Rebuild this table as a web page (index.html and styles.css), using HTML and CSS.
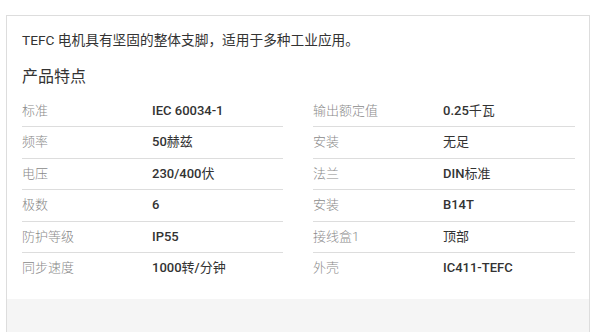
FILE: index.html
```html
<!DOCTYPE html>
<html lang="zh-CN">
<head>
<meta charset="utf-8">
<link rel="stylesheet" href="styles.css">
</head>
<body>
<div class="card">
  <div class="card-body">
    <p class="desc">TEFC 电机具有坚固的整体支脚，适用于多种工业应用。</p>
    <h2 class="title">产品特点</h2>
    <div class="specs">
      <div class="col">
        <div class="row"><span class="label">标准</span><span class="value">IEC 60034-1</span></div>
        <div class="row"><span class="label">频率</span><span class="value">50<span class="cjk">赫兹</span></span></div>
        <div class="row"><span class="label">电压</span><span class="value">230/400<span class="cjk">伏</span></span></div>
        <div class="row"><span class="label">极数</span><span class="value">6</span></div>
        <div class="row"><span class="label">防护等级</span><span class="value">IP55</span></div>
        <div class="row"><span class="label">同步速度</span><span class="value">1000<span class="cjk">转</span>/<span class="cjk">分钟</span></span></div>
      </div>
      <div class="col">
        <div class="row"><span class="label">输出额定值</span><span class="value">0.25<span class="cjk">千瓦</span></span></div>
        <div class="row"><span class="label">安装</span><span class="value"><span class="cjk">无足</span></span></div>
        <div class="row"><span class="label">法兰</span><span class="value">DIN<span class="cjk">标准</span></span></div>
        <div class="row"><span class="label">安装</span><span class="value">B14T</span></div>
        <div class="row"><span class="label">接线盒1</span><span class="value"><span class="cjk">顶部</span></span></div>
        <div class="row"><span class="label">外壳</span><span class="value">IC411-TEFC</span></div>
      </div>
    </div>
  </div>
  <div class="card-footer"></div>
</div>
</body>
</html>
```
FILE: styles.css
```css
html, body {
  margin: 0;
  padding: 0;
  background: #ffffff;
}
body {
  font-family: Roboto, "Noto Sans CJK SC", sans-serif;
  color: #333333;
  padding: 15px 4px 0 6px;
}
.card {
  width: 584px;
  box-sizing: border-box;
  border: 1px solid #dddddd;
  border-bottom: none;
  background: #ffffff;
}
.card-body {
  padding: 14px 14px 15px 15px;
}
.desc {
  margin: 0;
  font-size: 13.7px;
  line-height: 20px;
  color: #333333;
}
.title {
  margin: 15px 0 0 0;
  font-size: 16px;
  line-height: 24px;
  font-weight: 400;
  color: #333333;
}
.specs {
  margin-top: 6.5px;
  display: grid;
  grid-template-columns: 261px 262px;
  column-gap: 30px;
}
.row {
  display: grid;
  grid-template-columns: 130px 1fr;
  padding: 5.25px 0;
  line-height: 20px;
  font-size: 13px;
  border-bottom: 1px solid #dddddd;
}
.row:last-child {
  border-bottom: none;
}
.label {
  color: #8a8a8a;
  font-weight: 300;
}
.value {
  color: #333333;
  font-weight: 500;
}
.cjk {
  font-weight: 400;
}
.card-footer {
  height: 40px;
  background: #f5f5f5;
}
```
